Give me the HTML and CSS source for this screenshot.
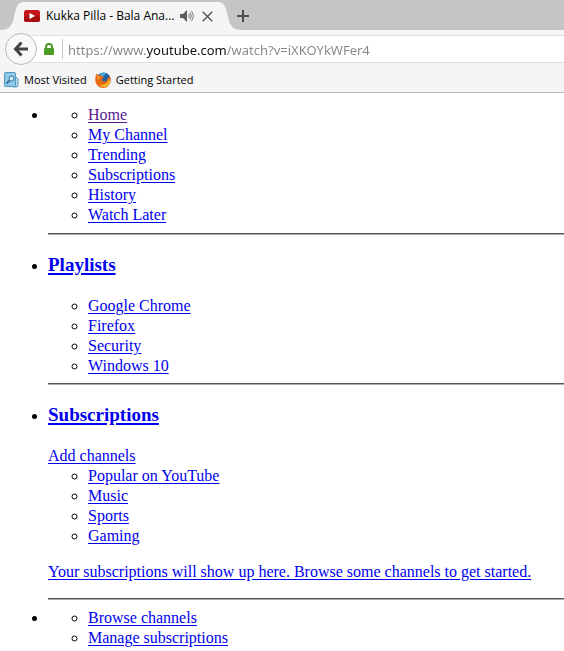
FILE: index.html
```html
<!DOCTYPE html>
<html lang="en">
<head>
<meta charset="utf-8">
<title>Kukka Pilla - Bala Anand</title>
<link rel="stylesheet" href="styles.css">
</head>
<body>
<header class="browser">
  <div class="tab-strip">
    <svg class="tab-edge" viewBox="0 0 24 28" aria-hidden="true"><path d="M0 28C8 28 12 25 14 15C16 5 18 0 24 0V28Z"/></svg>
    <div class="tab">
      <svg class="tab-icon" viewBox="0 0 16 12" aria-hidden="true"><rect width="16" height="12" rx="2.5" fill="#c4161c"/><rect y="6" width="16" height="6" rx="2.5" fill="#a80f12"/><path d="M5.5 3L11.2 6L5.5 9Z" fill="#fff"/></svg>
      <span class="tab-title">Kukka Pilla - Bala Ana...</span>
      <button class="tab-button" type="button" aria-label="Mute tab"><svg width="14" height="12" viewBox="0 0 14 12"><path d="M0 4H3L7 0V12L3 8H0Z" fill="#5c5c5c"/><path d="M8.5 4Q10 6 8.5 8M10 2.5Q12.500 6 10 9.500M11.500 1Q15 6 11.500 11" fill="none" stroke="#777"/></svg></button>
      <button class="tab-button" type="button" aria-label="Close tab"><svg width="11" height="11" viewBox="0 0 11 11"><path d="M.7.7L10.300 10.300M10.300.7L.7 10.300" stroke="#555" stroke-width="1.400"/></svg></button>
    </div>
    <svg class="tab-edge" viewBox="0 0 24 28" aria-hidden="true"><path d="M24 28C16 28 12 25 10 15C8 5 6 0 0 0V28Z"/></svg>
    <button class="new-tab" type="button" aria-label="New tab"><svg width="12" height="12" viewBox="0 0 12 12"><path d="M6 0V12M0 6H12" stroke="#4d4d4d" stroke-width="2"/></svg></button>
  </div>
  <div class="nav-bar">
    <button class="back" type="button" aria-label="Back"><svg width="16" height="16" viewBox="0 0 16 16"><path d="M8.500 1.500L2.500 8L8.500 14.500M3 8H15" fill="none" stroke="#444" stroke-width="3"/></svg></button>
    <div class="address">
      <svg class="lock" viewBox="0 0 10 12" aria-hidden="true"><path d="M2 6V4Q2 1 5 1T8 4V6" fill="none" stroke="#4a9a26" stroke-width="2"/><rect y="5" width="10" height="7" rx="1" fill="#4a9a26"/></svg>
      <input class="url" type="text" aria-label="Address" value="https://www.youtube.com/watch?v=iXKOYkWFer4">
    </div>
  </div>
  <nav class="bookmarks" aria-label="Bookmarks">
    <a class="bookmark" href="#"><svg width="15" height="16" viewBox="0 0 15 16" aria-hidden="true"><path d="M10 5H12L14 7V14L12 15H9Z" fill="#b5dcee" stroke="#5496bd"/><rect x=".5" y=".5" width="11" height="14" rx="1" fill="#8dc8e6" stroke="#5496bd"/><circle cx="7.500" cy="6.500" r="2.500" fill="#c8e9f7" stroke="#3f719a"/><path d="M5.500 8.500L2.500 11.500" stroke="#3f719a" stroke-width="2"/></svg>Most Visited</a>
    <a class="bookmark" href="#"><svg width="16" height="16" viewBox="0 0 16 16" aria-hidden="true"><circle cx="8.500" cy="7.500" r="7" fill="#1e62a8"/><path d="M5 2Q8-.5 11 1L9 4L5 6Z" fill="#4aa9df"/><path d="M1.500 1.500L4 3.500Q6 3 7 4L9 5L7 7Q7 10 10 9.500Q13 9 12.500 5L14.500 7L14 2.500Q17 7 15.300 11Q13 16 8 16Q2 15.500.5 10Q-.3 5 1.500 1.500Z" fill="#e66a16"/><path d="M3 12Q6 13.500 9 12.500Q13 11 14.800 6Q16.500 11 12.500 14Q8 17 3 12Z" fill="#f8b42a"/><path d="M2 3L5 5L3 8Z" fill="#f8a02a"/></svg>Getting Started</a>
  </nav>
</header>
<main class="page">
  <ul class="guide">
    <li>
      <ul>
        <li><a class="visited" href="#">Home</a></li>
        <li><a href="#">My Channel</a></li>
        <li><a href="#">Trending</a></li>
        <li><a href="#">Subscriptions</a></li>
        <li><a href="#">History</a></li>
        <li><a href="#">Watch Later</a></li>
      </ul>
      <hr>
    </li>
    <li>
      <h3><a href="#">Playlists</a></h3>
      <ul>
        <li><a href="#">Google Chrome</a></li>
        <li><a href="#">Firefox</a></li>
        <li><a href="#">Security</a></li>
        <li><a href="#">Windows 10</a></li>
      </ul>
      <hr>
    </li>
    <li>
      <h3><a href="#">Subscriptions</a></h3>
      <a href="#">Add channels</a>
      <ul>
        <li><a href="#">Popular on YouTube</a></li>
        <li><a href="#">Music</a></li>
        <li><a href="#">Sports</a></li>
        <li><a href="#">Gaming</a></li>
      </ul>
      <p><a href="#">Your subscriptions will show up here. Browse some channels to get started.</a></p>
      <hr>
    </li>
    <li>
      <ul>
        <li><a href="#">Browse channels</a></li>
        <li><a href="#">Manage subscriptions</a></li>
      </ul>
    </li>
  </ul>
</main>
</body>
</html>
```
FILE: styles.css
```css
* { box-sizing: border-box; }

body {
  margin: 0;
  background: #fff;
  color: #000;
  font: 16px/20px "Liberation Serif", "Times New Roman", serif;
}

button {
  display: flex;
  align-items: center;
  justify-content: center;
  padding: 0;
  border: 0;
  background: none;
}

svg { flex: none; }

/* Browser chrome */
.browser {
  background: #f5f5f5;
  border-bottom: 1px solid #bbb;
  font: 12px/16px "Open Sans", "Segoe UI", sans-serif;
}

.tab-strip {
  display: flex;
  height: 30px;
  padding-top: 2px;
  background: #c5c5c5;
}

.tab-edge {
  width: 24px;
  height: 28px;
  fill: #f5f5f5;
}

.tab {
  display: flex;
  align-items: center;
  width: 194px;
  background: #f5f5f5;
}

.tab-icon {
  width: 16px;
  height: 12px;
  margin-right: 6px;
}

.tab-title {
  flex: 1;
  white-space: nowrap;
}

.tab-button {
  width: 21px;
  height: 20px;
}

.new-tab {
  width: 22px;
  margin-left: -10px;
}

.nav-bar {
  display: flex;
  align-items: center;
  height: 38px;
  padding-left: 5px;
}

.back {
  z-index: 1;
  width: 32px;
  height: 32px;
  border: 1px solid #bbb;
  border-radius: 50%;
  background: #f8f8f8;
}

.address {
  display: flex;
  flex: 1;
  align-items: center;
  height: 28px;
  margin-left: -16px;
  padding-left: 23px;
  border: solid #e0e0e0;
  border-width: 1px 0;
  background: #fff;
}

.lock {
  width: 10px;
  height: 12px;
  margin-right: 8px;
}

.url {
  flex: 1;
  min-width: 0;
  height: 20px;
  padding: 2px 0 0 5px;
  border: 0;
  border-left: 1px solid #ccc;
  outline: 0;
  background: linear-gradient(90deg, #858585 83px, #111 83px, #111 163px, #858585 163px);
  background-clip: text;
  color: transparent;
  font: 13px/18px "Noto Sans", "Segoe UI", sans-serif;
}

.bookmarks {
  display: flex;
  gap: 8px;
  height: 24px;
  padding-left: 4px;
  font-size: 11px;
}

.bookmark {
  display: flex;
  align-items: center;
  gap: 5px;
  color: #000;
  text-decoration: none;
}

/* Page content */
.page {
  padding-top: 12px;
  overflow: hidden;
}

.guide { margin: 0; padding-left: 48px; }

.guide ul { margin: 0; padding-left: 40px; }

.guide a { color: #00e; text-underline-offset: 2px; }

.guide .visited { color: #551a8b; }

h3 {
  margin: 19px 0 20px;
  font-size: 19px;
  line-height: 22px;
}

h3 a { text-decoration-thickness: 2px; }

p { margin: 16px 0; }

hr {
  height: 2px;
  margin: 8px 0;
  border: 0;
  border-top: 1px solid #555;
  background: #aaa;
}

h3 + ul + hr { margin-top: 7px; }
```
